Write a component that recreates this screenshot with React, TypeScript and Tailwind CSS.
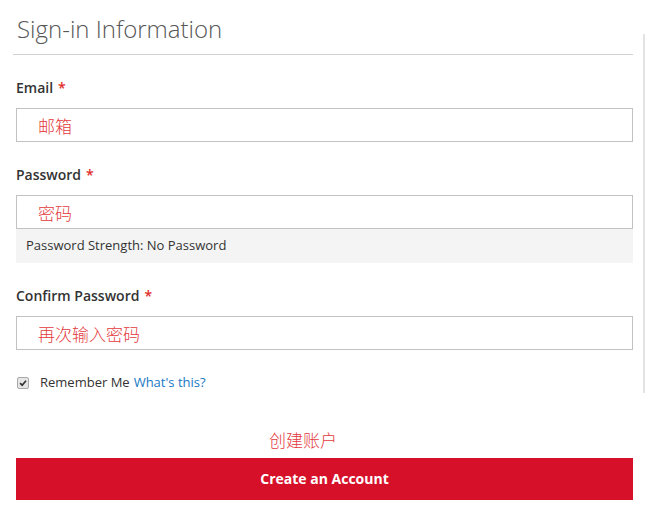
import React from 'react';

const Required = () => <span className="ml-[5px] text-[#e02b27]">*</span>;

const Field = ({ label, hint, children }: { label: string; hint: string; children?: React.ReactNode }) => (
  <div>
    <label className="block h-[20px] text-[14px] leading-[20px] font-semibold text-[#333]">
      {label}
      <Required />
    </label>
    <div className="mt-[10px] flex h-[34px] items-center border border-[#c2c2c2] bg-white pl-[21px]">
      <span className="text-[17px] leading-none font-light text-[#e4393c] [font-family:'Noto_Sans_CJK_SC',sans-serif]">{hint}</span>
    </div>
    {children}
  </div>
);

export default function App() {
  return (
    <div className="flex min-h-[521px] bg-white pl-[16px] [font-family:'Open_Sans',sans-serif]">
      <div className="w-[617px]">
        {/* Title */}
        <div className="-ml-[3px] border-b border-[#d1d1d1] pb-[9px] pl-[4px] pt-[13px]">
          <h2 className="text-[24px] leading-[32px] font-light text-[#575757]">Sign-in Information</h2>
        </div>

        <div className="mt-[23px]">
          <Field label="Email" hint="邮箱" />
        </div>

        <div className="mt-[23px]">
          <Field label="Password" hint="密码">
            <div className="flex h-[34px] items-center bg-[#f4f4f4] pl-[10px] text-[13px] text-[#333]">
              Password Strength: No Password
            </div>
          </Field>
        </div>

        <div className="mt-[23px]">
          <Field label="Confirm Password" hint="再次输入密码" />
        </div>

        {/* Remember me */}
        <div className="mt-[23px] flex items-center pl-[1px] text-[13px] text-[#333]">
          <span className="flex h-[12px] w-[12px] items-center justify-center rounded-[2px] border border-[#a9a9a9] bg-[#e6e6e6]">
            <svg viewBox="0 0 12 12" className="h-[10px] w-[10px]" fill="none" stroke="#333" strokeWidth="2">
              <path d="M2.5 6.2 L5 8.6 L9.6 3.2" />
            </svg>
          </span>
          <span className="ml-[11px]">Remember Me</span>
          <a className="ml-[4px] text-[#1979c3]" href="#">What's this?</a>
        </div>

        {/* Submit */}
        <div className="mt-[36px] pl-[253px] text-[17px] leading-[22px] font-light text-[#e4393c] [font-family:'Noto_Sans_CJK_SC',sans-serif]">
          创建账户
        </div>
        <button className="mt-[7px] flex h-[42px] w-full items-center justify-center bg-[#d7102a] text-[14px] font-bold text-white">
          Create an Account
        </button>
      </div>

      {/* Sidebar divider */}
      <div className="ml-[10px] mt-[34px] h-[359px] w-[2px] bg-[#e3e3e3]" />
    </div>
  );
}
